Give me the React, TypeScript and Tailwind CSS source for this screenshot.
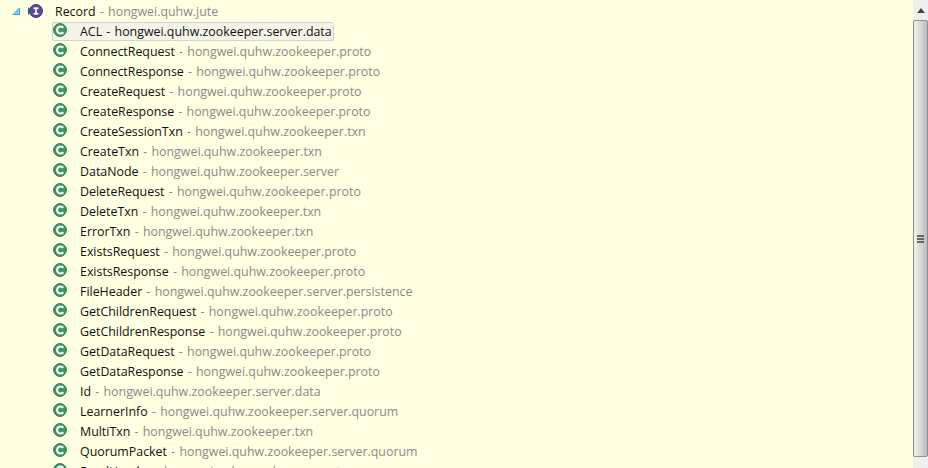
import React from 'react';

const rows: [string, string][] = [
  ['ACL', 'hongwei.quhw.zookeeper.server.data'],
  ['ConnectRequest', 'hongwei.quhw.zookeeper.proto'],
  ['ConnectResponse', 'hongwei.quhw.zookeeper.proto'],
  ['CreateRequest', 'hongwei.quhw.zookeeper.proto'],
  ['CreateResponse', 'hongwei.quhw.zookeeper.proto'],
  ['CreateSessionTxn', 'hongwei.quhw.zookeeper.txn'],
  ['CreateTxn', 'hongwei.quhw.zookeeper.txn'],
  ['DataNode', 'hongwei.quhw.zookeeper.server'],
  ['DeleteRequest', 'hongwei.quhw.zookeeper.proto'],
  ['DeleteTxn', 'hongwei.quhw.zookeeper.txn'],
  ['ErrorTxn', 'hongwei.quhw.zookeeper.txn'],
  ['ExistsRequest', 'hongwei.quhw.zookeeper.proto'],
  ['ExistsResponse', 'hongwei.quhw.zookeeper.proto'],
  ['FileHeader', 'hongwei.quhw.zookeeper.server.persistence'],
  ['GetChildrenRequest', 'hongwei.quhw.zookeeper.proto'],
  ['GetChildrenResponse', 'hongwei.quhw.zookeeper.proto'],
  ['GetDataRequest', 'hongwei.quhw.zookeeper.proto'],
  ['GetDataResponse', 'hongwei.quhw.zookeeper.proto'],
  ['Id', 'hongwei.quhw.zookeeper.server.data'],
  ['LearnerInfo', 'hongwei.quhw.zookeeper.server.quorum'],
  ['MultiTxn', 'hongwei.quhw.zookeeper.txn'],
  ['QuorumPacket', 'hongwei.quhw.zookeeper.server.quorum'],
  ['ReadHeader', 'hongwei.quhw.zookeeper.proto'],
];

const ClassIcon = () => (
  <svg width="16" height="16" viewBox="0 0 16 16" className="shrink-0 -ml-px mb-[3px]">
    <circle cx="8" cy="8" r="6.4" fill="#3a9a62" stroke="#2a7d4c" />
    <path d="M11.2 5.8 A3.5 3.5 0 1 0 11.2 10.2" fill="none" stroke="#fff" strokeWidth="2.2" />
  </svg>
);

const InterfaceIcon = () => (
  <svg width="18" height="16" viewBox="0 0 18 16" className="shrink-0">
    <circle cx="10" cy="8" r="6.5" fill="#5a4a9c" stroke="#4a3a8a" />
    <rect x="7.5" y="4.5" width="5" height="1.6" fill="#fff" />
    <rect x="9.2" y="4.5" width="1.7" height="7" fill="#fff" />
    <rect x="7.5" y="9.9" width="5" height="1.6" fill="#fff" />
    <path d="M2 4 L5.5 8 L2 12 Z" fill="#1c5f86" />
  </svg>
);

const Row = ({ name, pkg, selected }: { name: string; pkg: string; selected?: boolean }) => (
  <div className="h-5 flex items-start pl-[52px]">
    <div
      className={`h-[19px] flex items-center pr-[1px] rounded-[2px] border ${
        selected ? 'bg-[#f4f4ea] border-[#d4d4cc]' : 'border-transparent'
      }`}
    >
      <ClassIcon />
      <span className="ml-[12px] whitespace-pre text-[#111]">
        {name}
        <span className={selected ? 'text-[#111] ml-px' : 'text-[#8a8a8a] ml-px'}> - </span>
        <span className={selected ? 'text-[#111] ml-px' : 'text-[#8a8a8a] ml-px'}>{pkg}</span>
      </span>
    </div>
  </div>
);

export default function App() {
  return (
    <div className="w-[928px] h-[468px] overflow-hidden flex bg-[#ffffe1] font-['Open_Sans','Noto_Sans',sans-serif] text-[12.4px] leading-5">
      <div className="flex-1 min-w-0 pt-[2px] overflow-hidden">
        <div className="h-5 flex items-center">
          <svg width="10" height="10" viewBox="0 0 10 10" className="ml-[11px] mb-[2px] shrink-0">
            <path d="M8.5 2 L8.5 8.5 L2 8.5 Z" fill="#7fd0f5" stroke="#35a5e0" />
          </svg>
          <span className="ml-[5px] mb-[2px]"><InterfaceIcon /></span>
          <span className="ml-[11px] whitespace-pre text-[#111]">
            Record
            <span className="text-[#8a8a8a] ml-px"> - </span>
            <span className="text-[#8a8a8a] ml-px">hongwei.quhw.jute</span>
          </span>
        </div>
        {rows.map((r, i) => (
          <Row key={r[0]} name={r[0]} pkg={r[1]} selected={i === 0} />
        ))}
      </div>
      <div className="w-[15px] shrink-0 flex flex-col bg-[#efefef] pt-px">
        <div className="h-[19px] shrink-0 flex items-center justify-center">
          <svg width="8" height="5" viewBox="0 0 8 5"><path d="M4 0 L8 5 L0 5 Z" fill="#444" /></svg>
        </div>
        <div className="h-[437px] shrink-0 flex items-center justify-center rounded-[2px] border border-[#8f8f8f] bg-gradient-to-r from-[#f2f2f2] via-[#d8d8d8] to-[#bdbdbd]">
          <div className="w-[7px] flex flex-col gap-px">
            <div className="h-[2px] bg-[#666]" />
            <div className="h-[2px] bg-[#666]" />
            <div className="h-[2px] bg-[#666]" />
          </div>
        </div>
      </div>
    </div>
  );
}
